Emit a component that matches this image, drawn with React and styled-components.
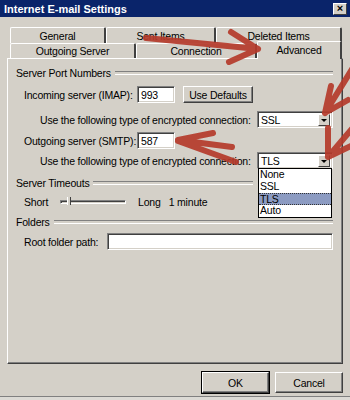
import React from "react";
import styled, { createGlobalStyle } from "styled-components";

const GlobalStyle = createGlobalStyle`
  html, body {
    margin: 0;
    padding: 0;
    background: #dcdad5;
  }
  * {
    box-sizing: border-box;
  }
`;

const Window = styled.div`
  position: relative;
  width: 350px;
  height: 397px;
  background: #d4d0c8;
  border-bottom: 1px solid #808080;
  display: flex;
  flex-direction: column;
  font-family: "Liberation Sans", Arial, sans-serif;
  font-size: 10.5px;
  letter-spacing: -0.2px;
  color: #000;
  overflow: hidden;
`;

const TitleBar = styled.div`
  height: 17px;
  background: #0a246a;
  color: #fff;
  font-weight: bold;
  font-size: 11px;
  letter-spacing: 0;
  display: flex;
  align-items: center;
  justify-content: space-between;
  padding: 0 3px 0 4px;
`;

const CloseBox = styled.div`
  width: 14px;
  height: 12px;
  background: #d4d0c8;
  border: 1px solid;
  border-color: #fff #404040 #404040 #fff;
  color: #000;
  font-size: 11px;
  line-height: 9px;
  text-align: center;
  font-weight: bold;
`;

const Body = styled.div`
  padding: 10px 7px 0 7px;
  display: flex;
  flex-direction: column;
`;

const TabStrip = styled.div`
  margin: 0 1px 0 3px;
  display: flex;
  flex-direction: column;
`;

const TabRow = styled.div`
  display: flex;
  align-items: flex-end;
  height: ${(p) => p.$h}px;
`;

const Tab = styled.div`
  width: ${(p) => p.$w}px;
  height: ${(p) => (p.$active ? p.$h + 3 : p.$h)}px;
  margin-bottom: ${(p) => (p.$active ? -1 : 0)}px;
  position: relative;
  z-index: ${(p) => (p.$active ? 2 : 1)};
  background: #d4d0c8;
  border-top: 1px solid #fff;
  border-left: 1px solid #fff;
  border-right: 2px solid #404040;
  border-radius: 2px 2px 0 0;
  display: flex;
  align-items: ${(p) => (p.$active ? "flex-start" : "center")};
  padding-top: ${(p) => (p.$active ? 2 : 0)}px;
  justify-content: center;
  white-space: nowrap;
`;

const Panel = styled.div`
  position: relative;
  height: 306px;
  border: 1px solid;
  border-color: #fff #404040 #404040 #fff;
  box-shadow: inset -1px -1px #808080;
  padding: 7px 9px 0 8px;
  display: flex;
  flex-direction: column;
`;

const GroupHeader = styled.div`
  display: flex;
  align-items: center;
  gap: 4px;
  height: 14px;
  margin-top: ${(p) => p.$mt || 0}px;
  margin-right: ${(p) => p.$mr || 0}px;
  &::after {
    content: "";
    flex: 1;
    height: 2px;
    border-top: 1px solid #808080;
    border-bottom: 1px solid #fff;
  }
`;

const Row = styled.div`
  display: flex;
  align-items: center;
  height: 17px;
  margin-top: ${(p) => p.$mt || 0}px;
  padding-left: ${(p) => p.$indent || 8}px;
  white-space: nowrap;
`;

const Label = styled.span`
  width: ${(p) => (p.$w ? `${p.$w}px` : "auto")};
  flex-shrink: 0;
`;

const Field = styled.div`
  position: relative;
  width: ${(p) => (p.$w ? `${p.$w}px` : "auto")};
  flex: ${(p) => (p.$grow ? 1 : "none")};
  height: 17px;
  background: #fff;
  border: 1px solid;
  border-color: #808080 #fff #fff #808080;
  box-shadow: inset 1px 1px #404040, inset -1px -1px #d4d0c8;
  padding: 0 3px;
  display: flex;
  align-items: center;
  margin-left: ${(p) => (p.$auto ? "auto" : "0")};
`;

const DropButton = styled.div`
  position: absolute;
  right: 2px;
  top: 2px;
  width: 12px;
  height: 12px;
  background: #d4d0c8;
  border: 1px solid;
  border-color: #fff #404040 #404040 #fff;
  display: flex;
  align-items: center;
  justify-content: center;
  &::after {
    content: "";
    border-left: 3px solid transparent;
    border-right: 3px solid transparent;
    border-top: 3px solid #000;
  }
`;

const DropList = styled.div`
  position: absolute;
  left: 0;
  top: 100%;
  width: 100%;
  background: #fff;
  border: 1px solid #000;
  z-index: 5;
`;

const DropItem = styled.div`
  height: 12px;
  line-height: 11px;
  padding-left: 1px;
  background: ${(p) => (p.$sel ? "#8c9bc2" : "#fff")};
  border-top: ${(p) => (p.$sel ? "1px dotted #333" : "none")};
  border-bottom: ${(p) => (p.$sel ? "1px dotted #333" : "none")};
`;

const Button = styled.div`
  width: ${(p) => p.$w}px;
  height: ${(p) => p.$h || 17}px;
  margin-left: ${(p) => p.$ml || 0}px;
  background: #d4d0c8;
  border: 1px solid;
  border-color: #fff #404040 #404040 #fff;
  box-shadow: ${(p) =>
    p.$default ? "0 0 0 1px #000, inset -1px -1px #808080" : "inset -1px -1px #808080"};
  display: flex;
  align-items: center;
  justify-content: center;
`;

const Slider = styled.div`
  position: relative;
  width: 66px;
  height: 4px;
  border: 1px solid;
  border-color: #808080 #fff #fff #808080;
  box-shadow: inset 1px 1px #404040;
  margin-right: 12px;
`;

const Thumb = styled.div`
  position: absolute;
  left: 6px;
  top: -4px;
  width: 4px;
  height: 8px;
  background: #d4d0c8;
  border-left: 1px solid #fff;
  border-right: 1px solid #404040;
`;

const Footer = styled.div`
  display: flex;
  justify-content: flex-end;
  gap: 6px;
  padding-top: 8px;
`;

const Arrows = styled.svg`
  position: absolute;
  left: 0;
  top: 0;
  pointer-events: none;
  z-index: 10;
`;

const Arrow = ({ d }) => (
  <path d={d} fill="none" stroke="#b4392a" strokeWidth="6" strokeLinecap="round" strokeLinejoin="round" opacity="0.92" />
);

export default function App() {
  return (
    <>
      <GlobalStyle />
      <Window>
        <TitleBar>
          <span>Internet E-mail Settings</span>
          <CloseBox>×</CloseBox>
        </TitleBar>
        <Body>
          <TabStrip>
            <TabRow $h={16}>
              <Tab $w={96} $h={16}>General</Tab>
              <Tab $w={110} $h={16}>Sent Items</Tab>
              <Tab $w={126} $h={16}>Deleted Items</Tab>
            </TabRow>
            <TabRow $h={15}>
              <Tab $w={126} $h={15}>Outgoing Server</Tab>
              <Tab $w={121} $h={15}>Connection</Tab>
              <Tab $w={85} $h={15} $active>Advanced</Tab>
            </TabRow>
          </TabStrip>
          <Panel>
            <GroupHeader>Server Port Numbers</GroupHeader>
            <Row $mt={6}>
              <Label $w={113}>Incoming server (IMAP):</Label>
              <Field $w={38}>993</Field>
              <Button $w={70} $ml={8}>Use Defaults</Button>
            </Row>
            <Row $mt={8} $indent={24}>
              <Label>Use the following type of encrypted connection:</Label>
              <Field $w={76} $auto>
                SSL
                <DropButton />
              </Field>
            </Row>
            <Row $mt={4}>
              <Label $w={113}>Outgoing server (SMTP):</Label>
              <Field $w={38}>587</Field>
            </Row>
            <Row $mt={3} $indent={24}>
              <Label>Use the following type of encrypted connection:</Label>
              <Field $w={76} $auto>
                TLS
                <DropButton />
                <DropList>
                  <DropItem>None</DropItem>
                  <DropItem>SSL</DropItem>
                  <DropItem $sel>TLS</DropItem>
                  <DropItem>Auto</DropItem>
                </DropList>
              </Field>
            </Row>
            <GroupHeader $mt={7} $mr={80}>Server Timeouts</GroupHeader>
            <Row $mt={3}>
              <Label $w={36}>Short</Label>
              <Slider>
                <Thumb />
              </Slider>
              <Label>Long&nbsp;&nbsp;&nbsp;1 minute</Label>
            </Row>
            <GroupHeader $mt={5}>Folders</GroupHeader>
            <Row $mt={4}>
              <Label $w={83}>Root folder path:</Label>
              <Field $grow />
            </Row>
          </Panel>
          <Footer>
            <Button $w={67} $h={21} $default>OK</Button>
            <Button $w={68} $h={21}>Cancel</Button>
          </Footer>
        </Body>
        <Arrows width="350" height="400" viewBox="0 0 350 400">
          <Arrow d="M146 38 L258 49 M231 32 L258 49 L229 62" />
          <Arrow d="M354 66 L325 113 M331 86 L325 113 M348 100 L325 113" />
          <Arrow d="M356 124 L328 157 M328 128 L328 157 M351 146 L328 157" />
          <Arrow d="M178 140 L213 133 M178 141 L236 162 M178 140 L232 147" />
        </Arrows>
      </Window>
    </>
  );
}
